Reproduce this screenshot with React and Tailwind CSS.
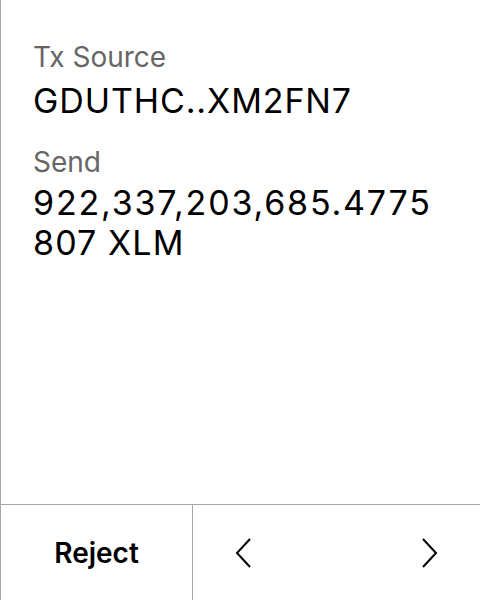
export default function App() {
  return (
    <div className="w-[480px] h-[600px] bg-white flex flex-col border-l border-[#a6a6a6]" style={{ fontFamily: "Inter, 'Noto Sans', sans-serif" }}>
      <div className="flex-1 flex flex-col pl-8 pt-[41px]">
        <div className="text-[28px] leading-[32px] text-[#666666]">Tx Source</div>
        <div className="text-[34px] leading-[40px] text-black mt-2 tracking-[0.9px] whitespace-nowrap">GDUTHC..XM2FN7</div>
        <div className="text-[28px] leading-[32px] text-[#666666] mt-[25px]">Send</div>
        <div className="text-[34px] leading-[40px] text-black mt-[5px] whitespace-nowrap">
          <div className="tracking-[1.8px]">922,337,203,685.4775</div>
          <div className="tracking-[1.1px]">807 XLM</div>
        </div>
      </div>
      <div className="h-[96px] flex border-t border-[#a6a6a6]">
        <div className="w-[192px] flex items-center justify-center border-r border-[#a6a6a6] text-[28px] font-semibold text-black">Reject</div>
        <div className="flex-1 flex items-center justify-between pl-[42px] pr-[42px]">
          <svg width="16" height="30" viewBox="0 0 16 30" fill="none" stroke="black" strokeWidth="2"><path d="M15 1 L2 15 L15 29" /></svg>
          <svg width="16" height="30" viewBox="0 0 16 30" fill="none" stroke="black" strokeWidth="2"><path d="M1 1 L14 15 L1 29" /></svg>
        </div>
      </div>
    </div>
  );
}
